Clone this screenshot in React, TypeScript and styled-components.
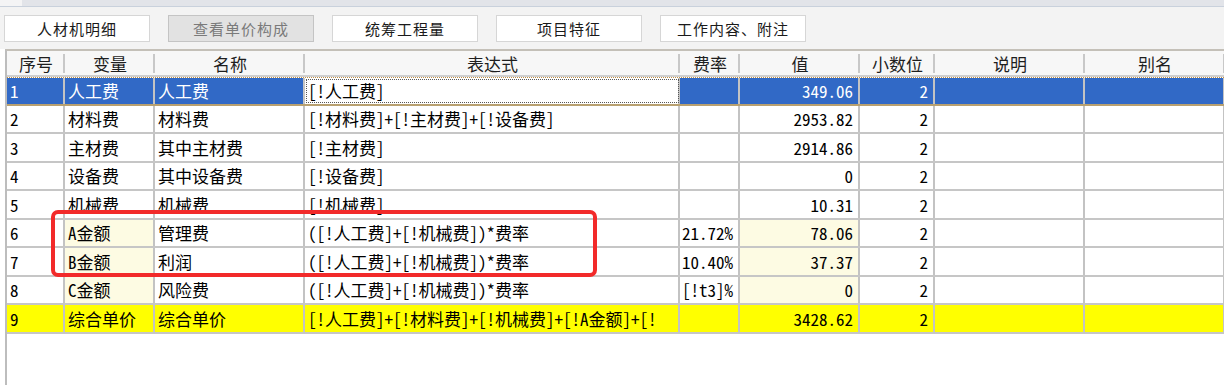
import React from "react";
import styled, { createGlobalStyle } from "styled-components";

const GlobalStyle = createGlobalStyle`
  html, body {
    margin: 0;
    padding: 0;
    background: #ffffff;
  }
  body {
    font-family: "Noto Sans CJK SC", "Liberation Sans", sans-serif;
    color: #000;
    overflow: hidden;
  }
`;

const Page = styled.div`
  position: relative;
  width: 1224px;
  height: 385px;
  overflow: hidden;
  background: #ffffff;
`;

const TopStrip = styled.div`
  display: flex;
  height: 6px;
  background: #e2e4e9;
  border-bottom: 1px solid #c9d1dc;

  span {
    width: 22px;
    background: #f4f4f5;
  }
`;

const Toolbar = styled.div`
  display: flex;
  align-items: center;
  gap: 18px;
  height: 42px;
  padding: 0 0 0 4px;
  background: #f3f3f3;
`;

interface IToolButton {
  pressed?: boolean;
}

const ToolButton = styled.button<IToolButton>`
  width: 146px;
  height: 27px;
  margin-top: 1px;
  padding: 0;
  border: 1px solid ${({ pressed }) => (pressed ? "#c4c4c4" : "#d6d6d6")};
  background: ${({ pressed }) => (pressed ? "#e2e2e2" : "#ffffff")};
  color: ${({ pressed }) => (pressed ? "#7a7a7a" : "#1a1a1a")};
  font-family: "Noto Sans CJK SC", sans-serif;
  font-size: 15px;
  font-weight: 400;
  letter-spacing: 1px;
`;

const Grid = styled.div`
  margin-left: 5px;
  height: 336px;
  border-left: 2px solid #bdbdbd;
  border-top: 2px solid #c4c0b8;
  background: #ffffff;
`;

const cols = [58, 90, 150, 375, 60, 120, 75, 150, 140];

const HeaderRow = styled.div`
  display: flex;
  height: 24px;
  background: #f7f7f7;
  border-bottom: 2px solid #cfcfcf;
`;

const HeaderCell = styled.div<{ w: number }>`
  position: relative;
  flex: 0 0 ${({ w }) => w}px;
  display: flex;
  align-items: center;
  justify-content: center;
  font-size: 17px;
  color: #1e1e1e;
  line-height: 1;

  &::after {
    content: "";
    position: absolute;
    right: 0;
    top: 3px;
    bottom: 2px;
    width: 2px;
    background: #c8c8c8;
  }
`;

type Tone = "plain" | "sel" | "focus" | "cream" | "yellow";

const tones: Record<Tone, { bg: string; fg: string }> = {
  plain: { bg: "#ffffff", fg: "#000000" },
  sel: { bg: "#3169c6", fg: "#ffffff" },
  focus: { bg: "#ffffff", fg: "#000000" },
  cream: { bg: "#fdfbe3", fg: "#000000" },
  yellow: { bg: "#ffff00", fg: "#000000" },
};

const Row = styled.div<{ sel?: boolean }>`
  display: flex;
  height: 26.5px;
  border-bottom: 2px solid ${({ sel }) => (sel ? "#b8a070" : "#c6c6c6")};
  ${({ sel }) => sel && "border-top: 1px dotted #c09048; height: 25.5px;"}
`;

const Cell = styled.div<{ w: number; tone: Tone; right?: boolean }>`
  flex: 0 0 ${({ w }) => w}px;
  box-sizing: border-box;
  display: flex;
  align-items: center;
  justify-content: ${({ right }) => (right ? "flex-end" : "flex-start")};
  padding: ${({ right }) => (right ? "0 5px 0 0" : "0 0 0 3px")};
  border-right: 2px solid #c3c3c3;
  background: ${({ tone }) => tones[tone].bg};
  color: ${({ tone }) => tones[tone].fg};
  font-size: 17px;
  font-feature-settings: "hwid";
  white-space: nowrap;
  overflow: hidden;
  line-height: 1;
  ${({ tone }) => tone === "focus" && "outline: 1px dotted #555; outline-offset: -2px;"}
`;

const Callout = styled.div`
  position: absolute;
  left: 51px;
  top: 210px;
  width: 538px;
  height: 59px;
  border: 4px solid #f22a2a;
  border-radius: 7px;
  pointer-events: none;
`;

interface IRow {
  no: string;
  varName: string;
  name: string;
  expr: string;
  rate: string;
  value: string;
  kind: "plain" | "sel" | "calc" | "total";
}

const rows: IRow[] = [
  { no: "1", varName: "人工费", name: "人工费", expr: "[!人工费]", rate: "", value: "349.06", kind: "sel" },
  { no: "2", varName: "材料费", name: "材料费", expr: "[!材料费]+[!主材费]+[!设备费]", rate: "", value: "2953.82", kind: "plain" },
  { no: "3", varName: "主材费", name: "其中主材费", expr: "[!主材费]", rate: "", value: "2914.86", kind: "plain" },
  { no: "4", varName: "设备费", name: "其中设备费", expr: "[!设备费]", rate: "", value: "0", kind: "plain" },
  { no: "5", varName: "机械费", name: "机械费", expr: "[!机械费]", rate: "", value: "10.31", kind: "plain" },
  { no: "6", varName: "A金额", name: "管理费", expr: "([!人工费]+[!机械费])*费率", rate: "21.72%", value: "78.06", kind: "calc" },
  { no: "7", varName: "B金额", name: "利润", expr: "([!人工费]+[!机械费])*费率", rate: "10.40%", value: "37.37", kind: "calc" },
  { no: "8", varName: "C金额", name: "风险费", expr: "([!人工费]+[!机械费])*费率", rate: "[!t3]%", value: "0", kind: "calc" },
  { no: "9", varName: "综合单价", name: "综合单价", expr: "[!人工费]+[!材料费]+[!机械费]+[!A金额]+[!", rate: "", value: "3428.62", kind: "total" },
];

const headers = ["序号", "变量", "名称", "表达式", "费率", "值", "小数位", "说明", "别名"];

const toneFor = (kind: IRow["kind"], col: number): Tone => {
  if (kind === "sel") return col === 3 ? "focus" : "sel";
  if (kind === "total") return "yellow";
  if (kind === "calc" && (col === 1 || col === 5)) return "cream";
  return "plain";
};

const DataRow: React.FC<{ row: IRow }> = ({ row }) => {
  const values = [row.no, row.varName, row.name, row.expr, row.rate, row.value, "2", "", ""];
  const rightCols = [4, 5, 6];
  return (
    <Row sel={row.kind === "sel"}>
      {values.map((v, i) => (
        <Cell key={i} w={cols[i]} tone={toneFor(row.kind, i)} right={rightCols.includes(i)}>
          {v}
        </Cell>
      ))}
    </Row>
  );
};

const buttons = ["人材机明细", "查看单价构成", "统筹工程量", "项目特征", "工作内容、附注"];

export default function App() {
  return (
    <Page>
      <GlobalStyle />
      <TopStrip>
        <span />
      </TopStrip>
      <Toolbar>
        {buttons.map((b, i) => (
          <ToolButton key={b} pressed={i === 1}>
            {b}
          </ToolButton>
        ))}
      </Toolbar>
      <Grid>
        <HeaderRow>
          {headers.map((h, i) => (
            <HeaderCell key={h} w={cols[i]}>
              {h}
            </HeaderCell>
          ))}
        </HeaderRow>
        {rows.map((r) => (
          <DataRow key={r.no} row={r} />
        ))}
      </Grid>
      <Callout />
    </Page>
  );
}
